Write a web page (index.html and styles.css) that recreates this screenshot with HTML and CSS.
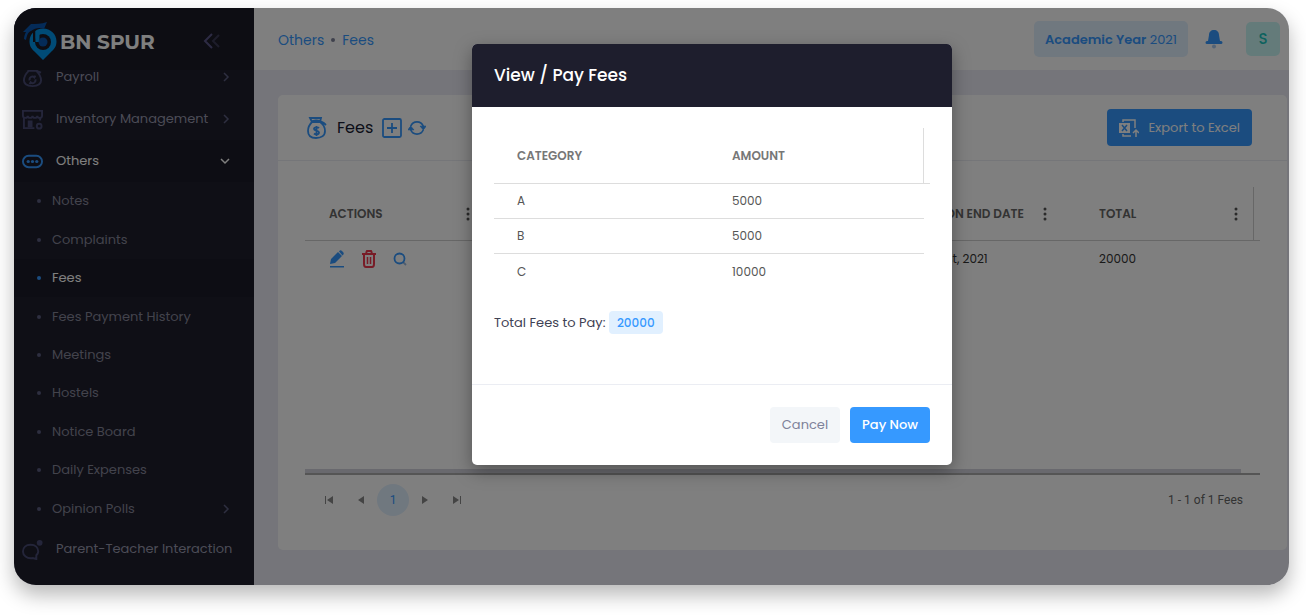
FILE: index.html
```html
<!DOCTYPE html>
<html lang="en">
<head>
<meta charset="utf-8">
<title>BN Spur - Fees</title>
<link rel="stylesheet" href="styles.css">
</head>
<body>
<div class="frame">
  <aside class="sidebar">
    <div class="brand">
      <svg class="brand-mark" viewBox="0 0 34 40" aria-hidden="true">
        <path fill="#0096ec" d="M20 7.500c7.500 0 13.500 5.500 13.500 13 0 5-2.500 8-6 11L20 39l-7.500-7.500c-3.500-3-6-6-6-11 0-7.500 6-13 13.500-13z"/>
        <circle cx="20" cy="21" r="8" fill="#1a1a27"/>
        <path fill="#1a1a27" d="M10 9h2.500v12H10z"/>
        <path fill="#0096ec" d="M12.500 10h4v11h-4z"/>
        <circle cx="20" cy="21" r="4.500" fill="#0856b0"/>
        <path fill="#0856b0" d="M0 11 8 3c5 0 10 0 16-2l-3 7c-4-2-9-1-13 2-3 1-4 4-5 9l-2-1c0-3 1-5 2-7z"/>
      </svg>
      <span class="brand-name">BN SPUR</span>
      <button class="collapse" type="button" aria-label="Collapse menu">
        <svg width="18" height="16" viewBox="0 0 18 16" fill="none" stroke-width="2"><path stroke="#5b5788" d="M9 1 2 8l7 7"/><path stroke="#3b3a55" d="m16 2-6 6 6 6"/></svg>
      </button>
    </div>
    <nav class="menu">
      <a class="item" href="#">
        <svg class="item-icon" viewBox="0 0 22 22"><path d="M7 4 5 1h12l-2 3H7C4 7 2 10 2 14c0 4 3 6 9 6s9-2 9-6c0-4-2-7-5-10l5 2"/><path d="M8 14a3 3 0 0 1 5-3l1-2m0 4a3 3 0 0 1-5 3l-1 2"/></svg>
        <span>Payroll</span><svg class="arrow" viewBox="0 0 8 10"><path d="m2 1 4 4-4 4"/></svg>
      </a>
      <a class="item" href="#">
        <svg class="item-icon" viewBox="0 0 22 22"><path d="M2 20V9m17 3V9M1 2h20v5c0 3-5 3-5 0 0 3-5 3-5 0 0 3-5 3-5 0 0 3-5 3-5 0zM1 20h12"/><path fill="currentColor" d="M7 13h3v5H7z"/><circle cx="18" cy="18" r="2.500"/></svg>
        <span>Inventory Management</span><svg class="arrow" viewBox="0 0 8 10"><path d="m2 1 4 4-4 4"/></svg>
      </a>
      <a class="item open" href="#">
        <svg class="item-icon" viewBox="0 0 22 22"><rect x="1" y="5" width="20" height="12" rx="6"/><g fill="currentColor" stroke="none"><circle cx="6.500" cy="11" r="1.700"/><circle cx="11" cy="11" r="1.700"/><circle cx="15.500" cy="11" r="1.700"/></g></svg>
        <span>Others</span><svg class="arrow" viewBox="0 0 10 8"><path d="m1 2 4 4 4-4"/></svg>
      </a>
      <div class="submenu">
        <a href="#">Notes</a>
        <a href="#">Complaints</a>
        <a class="current" href="#">Fees</a>
        <a href="#">Fees Payment History</a>
        <a href="#">Meetings</a>
        <a href="#">Hostels</a>
        <a href="#">Notice Board</a>
        <a href="#">Daily Expenses</a>
        <a href="#">Opinion Polls<svg class="arrow" viewBox="0 0 8 10"><path d="m2 1 4 4-4 4"/></svg></a>
      </div>
      <a class="item" href="#">
        <svg class="item-icon" viewBox="0 0 22 22"><path stroke-width="2" d="M9 6c5 0 8 3 8 7 0 2-1 3-2 4v4l-4-1c-6 1-10-3-10-7s3-7 8-7z"/><circle cx="18.500" cy="4" r="3" fill="currentColor" stroke="none"/></svg>
        <span>Parent-Teacher Interaction</span>
      </a>
    </nav>
  </aside>

  <div class="main">
    <header class="topbar">
      <nav class="crumbs"><a href="#">Others</a><i></i><a href="#">Fees</a></nav>
      <button class="year" type="button"><b>Academic Year</b> 2021</button>
      <button class="bell" type="button" aria-label="Notifications">
        <svg width="18" height="20" viewBox="0 0 18 20"><path fill="#3699ff" d="M9 1c3 0 5 2 5 5l1 6h1a1.500 1.500 0 0 1 0 3H2a1.500 1.500 0 0 1 0-3h1l1-6c0-3 2-5 5-5z"/><circle cx="9" cy="17.500" r="2" fill="#a9c9ee"/></svg>
      </button>
      <button class="avatar" type="button">S</button>
    </header>

    <section class="card">
      <div class="card-head">
        <svg class="blue" width="20" height="22" viewBox="0 0 20 22"><path d="M5 5 3 1h11l-1 4M5 5C3 7 1 10 1 14c0 5 3 7 8 7s9-2 9-7c0-4-2-7-5-9H5c0-2 8-3 14 3"/><path d="M12 11c-1-1-5-1-5 1s5 1 5 3.500-4 2-5 1M9.500 9v10"/></svg>
        <h1>Fees</h1>
        <button class="icon-btn" type="button" aria-label="Add fees"><svg class="blue" width="20" height="20" viewBox="0 0 20 20"><rect x="1" y="1" width="18" height="18" rx="1.500"/><path d="M10 5v10M5 10h10"/></svg></button>
        <button class="icon-btn" type="button" aria-label="Refresh"><svg class="blue" width="18" height="18" viewBox="0 0 20 20"><path d="M3 8a7.500 7.500 0 0 1 14 0v2M17 12a7.500 7.500 0 0 1-14 0v-2"/><path fill="#3699ff" stroke-width="1" d="M13.500 8H20l-3 4zM0 12h6.500L3 8z"/></svg></button>
        <button class="export" type="button">
          <svg width="20" height="20" viewBox="0 0 20 20" fill="none" stroke="#fff" stroke-width="1.500"><path d="M4 4V2h12v8M4 16v2h8M17 19v-7m-3 3 3-3 3 3"/><path fill="#fff" stroke="none" d="M0 5h11v10H0z"/><path stroke="#3699ff" d="m3 7 5 6m0-6-5 6"/></svg>
          Export to Excel
        </button>
      </div>
      <div class="grid-area">
        <table class="grid">
          <colgroup><col class="c-actions"><col><col class="c-date"><col class="c-total"><col class="c-gutter"></colgroup>
          <thead>
            <tr>
              <th><div class="th">Actions<svg class="dots" viewBox="0 0 4 14"><circle cx="2" cy="2" r="1.500"/><circle cx="2" cy="7" r="1.500"/><circle cx="2" cy="12" r="1.500"/></svg></div></th>
              <th></th>
              <th><div class="th">Collection end date<svg class="dots" viewBox="0 0 4 14"><circle cx="2" cy="2" r="1.500"/><circle cx="2" cy="7" r="1.500"/><circle cx="2" cy="12" r="1.500"/></svg></div></th>
              <th class="last"><div class="th">Total<svg class="dots" viewBox="0 0 4 14"><circle cx="2" cy="2" r="1.500"/><circle cx="2" cy="7" r="1.500"/><circle cx="2" cy="12" r="1.500"/></svg></div></th>
              <th></th>
            </tr>
          </thead>
          <tbody>
            <tr>
              <td>
                <div class="actions">
                  <button class="icon-btn" type="button" aria-label="Edit"><svg width="16" height="18" viewBox="0 0 16 18" fill="#3699ff"><path d="m1 14 1-5 7-7 4 4-7 7zM10 1.500c1-1.500 2-1.500 3-.5l1 1c1 1 1 2 0 3l-.500.500zM1 16h14v1.500H1z"/></svg></button>
                  <button class="icon-btn" type="button" aria-label="Delete"><svg width="16" height="18" viewBox="0 0 16 18" fill="none" stroke="#f0384f" stroke-width="2"><path d="M1 4h14M5 3l1-2h4l1 2M3 5v9c0 2 1 3 2 3h6c1 0 2-1 2-3V5"/><path stroke-width="1.500" d="M6.500 7v7m3-7v7"/></svg></button>
                  <button class="icon-btn" type="button" aria-label="View"><svg width="14" height="14" viewBox="0 0 14 14" fill="none" stroke-width="1.800"><path stroke="#9ab9df" d="m10 10 3 3"/><circle stroke="#3699ff" cx="6.500" cy="6.500" r="5"/></svg></button>
                </div>
              </td>
              <td></td>
              <td>August 31st, 2021</td>
              <td>20000</td>
              <td></td>
            </tr>
          </tbody>
        </table>
        <div class="scroll"><div class="thumb"></div></div>
        <div class="pager">
          <button type="button" aria-label="First page"><svg width="8" height="8" viewBox="0 0 8 8"><path d="M0 0h1v8H0zM8 0v8L2 4z"/></svg></button>
          <button type="button" aria-label="Previous page"><svg width="8" height="8" viewBox="0 0 8 8"><path d="M7 0v8L1 4z"/></svg></button>
          <button type="button" class="page">1</button>
          <button type="button" aria-label="Next page"><svg width="8" height="8" viewBox="0 0 8 8"><path d="M1 0v8l6-4z"/></svg></button>
          <button type="button" aria-label="Last page"><svg width="8" height="8" viewBox="0 0 8 8"><path d="M7 0h1v8H7zM0 0v8l6-4z"/></svg></button>
          <span class="count">1 - 1 of 1 Fees</span>
        </div>
      </div>
    </section>
  </div>

  <div class="overlay">
    <div class="dialog" role="dialog" aria-labelledby="dialog-title">
      <h2 id="dialog-title">View / Pay Fees</h2>
      <div class="dialog-body">
        <table class="fees">
          <colgroup><col><col><col class="c-gutter"></colgroup>
          <thead><tr><th>Category</th><th class="last">Amount</th><th></th></tr></thead>
          <tbody>
            <tr><td>A</td><td>5000</td></tr>
            <tr><td>B</td><td>5000</td></tr>
            <tr><td>C</td><td>10000</td></tr>
          </tbody>
        </table>
        <p class="sum">Total Fees to Pay: <span>20000</span></p>
      </div>
      <div class="dialog-foot">
        <button class="btn cancel" type="button">Cancel</button>
        <button class="btn pay" type="button">Pay Now</button>
      </div>
    </div>
  </div>
</div>
</body>
</html>
```
FILE: styles.css
```css
* { box-sizing: border-box; }
body {
  margin: 0;
  padding: 8px 17px 30px 14px;
  height: 100vh;
  background: #fff;
  font: 13px/20px Poppins, Inter, "Liberation Sans", sans-serif;
  color: #3f4254;
}
a { color: inherit; text-decoration: none; }
button { font: inherit; border: 0; background: none; padding: 0; cursor: pointer; }
svg { display: block; flex: none; }
table { border-collapse: separate; border-spacing: 0; table-layout: fixed; width: 100%; }
th { text-align: left; text-transform: uppercase; font-weight: 600; }
h1, h2, p { margin: 0; }

.frame {
  position: relative;
  display: flex;
  height: 100%;
  border-radius: 22px;
  overflow: hidden;
  box-shadow: 0 10px 20px rgba(0, 0, 0, .28);
}

/* Sidebar */
.sidebar { width: 240px; flex: none; background: #1e1e2d; overflow: hidden; color: #9899ac; white-space: nowrap; }
.brand {
  position: relative;
  z-index: 1;
  display: flex;
  align-items: center;
  height: 62px;
  padding: 3px 33px 0 9px;
  background: #1a1a27;
}
.brand-mark { width: 34px; height: 40px; }
.brand-name { margin-left: 3px; padding-top: 3px; font-family: Montserrat, Poppins, sans-serif; font-size: 20px; font-weight: 700; line-height: 24px; color: #fff; }
.collapse { margin-left: auto; }
.menu { margin-top: -14px; }
.item { display: flex; align-items: center; height: 42px; padding: 0 24px 0 8px; }
.item-icon {
  width: 21px; height: 21px; margin-right: 13px;
  color: #494b74; fill: none; stroke: currentColor; stroke-width: 2;
}
.arrow { width: 8px; height: 10px; margin-left: auto; fill: none; stroke: #5c5e80; stroke-width: 1.500; }
.open { background: #1b1b28; color: #fff; }
.open .item-icon { color: #3699ff; }
.open .arrow { width: 10px; height: 8px; stroke: #fff; }
.submenu { display: grid; min-height: 346px; }
.submenu a { display: flex; align-items: center; padding: 0 24px 0 23px; color: #868799; }
.submenu a::before { content: ""; width: 4px; height: 4px; margin-right: 11px; border-radius: 50%; background: #5c5e80; }
.submenu .current { background: #1b1b28; color: #fff; }
.submenu .current::before { background: #3699ff; }

/* Main column */
.main { flex: 1; min-width: 0; display: flex; flex-direction: column; background: #ebebf4; }
.topbar { display: flex; align-items: center; height: 62px; padding: 0 9px 0 24px; background: #fff; }
.crumbs { display: flex; align-items: center; gap: 7px; margin-right: auto; padding-top: 2px; color: #3699ff; font-size: 14px; }
.crumbs i { width: 4px; height: 4px; border-radius: 50%; background: #7e8299; }
.year { height: 36px; padding: 2px 11px 0; border-radius: 5px; background: #e1f0ff; color: #3699ff; }
.year b { font-weight: 600; }
.bell { margin: 0 23px 0 17px; }
.avatar { width: 34px; height: 34px; border-radius: 5px; background: #c9f7f5; color: #1bc5bd; font-size: 15px; font-weight: 500; }

.card { flex: 1; display: flex; flex-direction: column; margin: 25px 2px 35px 24px; border-radius: 5px; background: #fff; }
.card-head { display: flex; align-items: center; height: 66px; padding: 0 35px 0 29px; border-bottom: 1px solid #ebedf3; }
.card-head h1 { margin: 0 9px 0 10px; font-size: 16px; font-weight: 400; line-height: 24px; color: #181c32; }
.blue { fill: none; stroke: #3699ff; stroke-width: 1.800; }
.card-head .icon-btn { margin-right: 6px; }
.export {
  display: flex; align-items: center; gap: 9px;
  height: 37px; margin-left: auto; padding: 0 12px;
  border-radius: 4px; background: #3699ff; color: #fff;
}

.grid-area { flex: 1; display: flex; flex-direction: column; padding: 26px 27px 0; }
.grid { font-size: 12px; color: #333; }
.c-actions { width: 180px; }
.c-date { width: 213px; }
.c-total { width: 179px; }
.c-gutter { width: 6px; }
.grid th, .grid td { padding: 0; white-space: nowrap; }
.grid th { height: 54px; border-bottom: 1px solid #d8d8d8; font-size: 12px; color: #666; }
.grid th:not(:last-child), .grid td:not(:last-child) { padding: 0 15px 0 24px; }
.grid th:nth-child(3), .grid td:nth-child(3) { padding-left: 28px; }
.grid td { height: 36px; }
.th { display: flex; align-items: center; justify-content: space-between; }
.grid th:nth-child(3) .th { padding-right: 13px; }
.dots { width: 4px; height: 14px; fill: #555; }
.grid .last, .grid th { border-color: #cfcfcf; }
.last { border-right: 1px solid #d8d8d8; }
.actions { display: flex; align-items: center; gap: 16px; }
.scroll { margin-top: auto; border-bottom: 2px solid #aaa; }
.thumb { width: 98%; height: 4px; background: #d3d3dd; }
.pager { display: flex; align-items: center; height: 75px; padding: 0 17px 25px 8px; }
.pager button { display: flex; align-items: center; justify-content: center; width: 32px; height: 32px; fill: #888; }
.pager .page { border-radius: 50%; background: #e1f0ff; color: #3699ff; font: 12px/16px Roboto, sans-serif; }
.count { margin-left: auto; font: 12px/16px Roboto, sans-serif; color: #666; }

/* Dialog */
.overlay {
  position: absolute;
  inset: 0;
  z-index: 2;
  display: flex;
  align-items: flex-start;
  justify-content: center;
  padding: 36px 0 0 121px;
  background: rgba(0, 0, 0, .5);
}
.dialog { width: 480px; border-radius: 5px; overflow: hidden; background: #fff; box-shadow: 0 6px 18px rgba(0, 0, 0, .35); }
.dialog h2 { padding: 19px 22px; background: #1e1e2d; color: #fff; font-size: 17px; font-weight: 500; line-height: 25px; }
.dialog-body { padding: 21px 22px 50px; }
.fees { font-size: 12px; color: #555; }
.fees th, .fees td { padding: 0 0 0 23px; border-bottom: 1px solid #ddd; }
.fees th { height: 56px; font-size: 12px; color: #777; }
.fees th:last-child { padding: 0; }
.fees .last { border-right: 1px solid #ddd; }
.fees td { height: 35px; }
.fees tr:last-child td { border-bottom: 0; }
.sum { margin-top: 22px; line-height: 23px; }
.sum span { display: inline-block; padding: 0 8px; border-radius: 4px; background: #e1f0ff; color: #3699ff; font-size: 12px; font-weight: 500; }
.dialog-foot { display: flex; justify-content: flex-end; gap: 10px; padding: 22px; border-top: 1px solid #ebedf3; }
.btn { height: 36px; padding: 0 12px; border-radius: 4px; font-weight: 500; }
.cancel { background: #f3f6f9; color: #7e8299; font-weight: 400; }
.pay { background: #3699ff; color: #fff; }
```
